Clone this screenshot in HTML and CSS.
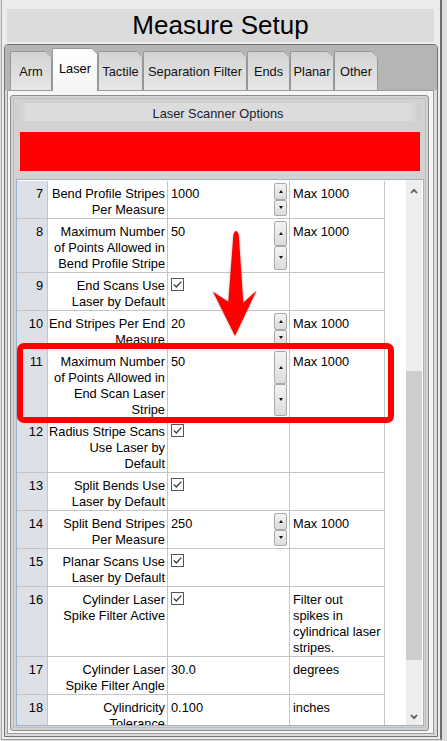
FILE: index.html
```html
<!DOCTYPE html>
<html>
<head>
<meta charset="utf-8">
<title>Measure Setup</title>
<link rel="stylesheet" href="styles.css">
</head>
<body>
<div class="app">
  <div class="title">Measure Setup</div>
  <div class="frame">
    <div class="tabs">
      <div class="tab tab-arm">Arm</div>
      <div class="tab tab-laser active">Laser</div>
      <div class="tab tab-tactile">Tactile</div>
      <div class="tab tab-sep">Separation Filter</div>
      <div class="tab tab-ends">Ends</div>
      <div class="tab tab-planar">Planar</div>
      <div class="tab tab-other">Other</div>
    </div>
    <div class="page">
      <div class="panel">
        <div class="panel-head">Laser Scanner Options</div>
        <div class="red-bar"></div>
        <div class="grid-box">
          <div class="grid-view">
            <div class="grid">
              <div class="c n">7</div>
              <div class="c l">Bend Profile Stripes<br>Per Measure</div>
              <div class="c v"><span class="txt">1000</span><span class="spin"><span class="up"></span><span class="dn"></span></span></div>
              <div class="c u">Max 1000</div>

              <div class="c n">8</div>
              <div class="c l">Maximum Number<br>of Points Allowed in<br>Bend Profile Stripe</div>
              <div class="c v"><span class="txt">50</span><span class="spin"><span class="up"></span><span class="dn"></span></span></div>
              <div class="c u">Max 1000</div>

              <div class="c n">9</div>
              <div class="c l">End Scans Use<br>Laser by Default</div>
              <div class="c v"><svg class="cb" viewBox="0 0 13 13"><rect x="0.5" y="0.5" width="12" height="12" fill="#fff" stroke="#555"/><path d="M2.8 6.4 L5.3 9 L10.3 3.6" fill="none" stroke="#3a3a3a" stroke-width="1.3"/></svg></div>
              <div class="c u"></div>

              <div class="c n">10</div>
              <div class="c l">End Stripes Per End<br>Measure</div>
              <div class="c v"><span class="txt">20</span><span class="spin"><span class="up"></span><span class="dn"></span></span></div>
              <div class="c u">Max 1000</div>

              <div class="c n">11</div>
              <div class="c l">Maximum Number<br>of Points Allowed in<br>End Scan Laser<br>Stripe</div>
              <div class="c v"><span class="txt">50</span><span class="spin"><span class="up"></span><span class="dn"></span></span></div>
              <div class="c u">Max 1000</div>

              <div class="c n">12</div>
              <div class="c l">Radius Stripe Scans<br>Use Laser by<br>Default</div>
              <div class="c v"><svg class="cb" viewBox="0 0 13 13"><rect x="0.5" y="0.5" width="12" height="12" fill="#fff" stroke="#555"/><path d="M2.8 6.4 L5.3 9 L10.3 3.6" fill="none" stroke="#3a3a3a" stroke-width="1.3"/></svg></div>
              <div class="c u"></div>

              <div class="c n">13</div>
              <div class="c l">Split Bends Use<br>Laser by Default</div>
              <div class="c v"><svg class="cb" viewBox="0 0 13 13"><rect x="0.5" y="0.5" width="12" height="12" fill="#fff" stroke="#555"/><path d="M2.8 6.4 L5.3 9 L10.3 3.6" fill="none" stroke="#3a3a3a" stroke-width="1.3"/></svg></div>
              <div class="c u"></div>

              <div class="c n">14</div>
              <div class="c l">Split Bend Stripes<br>Per Measure</div>
              <div class="c v"><span class="txt">250</span><span class="spin"><span class="up"></span><span class="dn"></span></span></div>
              <div class="c u">Max 1000</div>

              <div class="c n">15</div>
              <div class="c l">Planar Scans Use<br>Laser by Default</div>
              <div class="c v"><svg class="cb" viewBox="0 0 13 13"><rect x="0.5" y="0.5" width="12" height="12" fill="#fff" stroke="#555"/><path d="M2.8 6.4 L5.3 9 L10.3 3.6" fill="none" stroke="#3a3a3a" stroke-width="1.3"/></svg></div>
              <div class="c u"></div>

              <div class="c n">16</div>
              <div class="c l">Cylinder Laser<br>Spike Filter Active</div>
              <div class="c v"><svg class="cb" viewBox="0 0 13 13"><rect x="0.5" y="0.5" width="12" height="12" fill="#fff" stroke="#555"/><path d="M2.8 6.4 L5.3 9 L10.3 3.6" fill="none" stroke="#3a3a3a" stroke-width="1.3"/></svg></div>
              <div class="c u">Filter out<br>spikes in<br>cylindrical laser<br>stripes.</div>

              <div class="c n">17</div>
              <div class="c l">Cylinder Laser<br>Spike Filter Angle</div>
              <div class="c v"><span class="txt">30.0</span></div>
              <div class="c u">degrees</div>

              <div class="c n">18</div>
              <div class="c l">Cylindricity<br>Tolerance</div>
              <div class="c v"><span class="txt">0.100</span></div>
              <div class="c u">inches</div>
            </div>
          </div>
          <div class="vscroll">
            <div class="sb-btn sb-up"><svg width="8" height="6" viewBox="0 0 8 6"><polyline points="1,5 4,1.8 7,5" fill="none" stroke="#5c5c5c" stroke-width="1.8"/></svg></div>
            <div class="sb-track"><div class="sb-thumb"></div></div>
            <div class="sb-btn sb-down"><svg width="8" height="6" viewBox="0 0 8 6"><polyline points="1,1 4,4.2 7,1" fill="none" stroke="#5c5c5c" stroke-width="1.8"/></svg></div>
          </div>
        </div>
      </div>
    </div>
  </div>
</div>
<svg class="overlay" width="447" height="741" viewBox="0 0 447 741">
  <rect x="20" y="346" width="371" height="74" rx="4" ry="4" fill="none" stroke="#ff0000" stroke-width="6"/>
  <path class="arrow" d="M233.4 235 Q236 227 238.8 235 L243.3 302.7 L256.5 290.7 L235 336 L213 291.7 L228.3 301.7 Z" fill="#ff0000"/>
</svg>
</body>
</html>
```

FILE: styles.css
```css
* { box-sizing: border-box; }
html, body { margin: 0; padding: 0; }
body {
  position: relative;
  width: 447px;
  height: 741px;
  overflow: hidden;
  background: #dedede;
  font-family: "Liberation Sans", Arial, sans-serif;
  font-size: 12.8px;
  color: #000;
}

.app {
  margin-left: 1px;
  width: 441px;
  height: 740px;
  display: flex;
  flex-direction: column;
  padding-top: 9px;
  background: #ececec;
  border-left: 1px solid #a9a9a9;
  border-right: 2px solid #6f6f6f;
  border-bottom: 1px solid #9d9d9d;
}

.title {
  height: 33px;
  margin: 0 6px 0 5px;
  background: #dcdcdc;
  display: flex;
  align-items: center;
  justify-content: center;
  font-size: 26px;
  color: #000;
}

.frame {
  flex: 1;
  min-height: 0;
  margin: 2px 2px 2px 2px;
  border: 1px solid #737373;
  border-radius: 4px 4px 0 0;
  background: #dadada;
  display: flex;
  flex-direction: column;
}

.tabs {
  height: 45px;
  flex: none;
  background: #b5b5b5;
  border-radius: 3px 3px 0 0;
  display: flex;
  align-items: flex-end;
  padding-left: 5px;
}

.tab {
  height: 39px;
  border: 1px solid #979797;
  border-bottom: none;
  border-radius: 2px 0 0 0;
  display: flex;
  align-items: center;
  justify-content: center;
  white-space: nowrap;
  color: #111;
  background:
    linear-gradient(225deg, transparent 4.4px, #979797 4.4px, #979797 5.5px, transparent 5.5px) border-box,
    linear-gradient(#d3d3d3, #e7e7e7);
  clip-path: polygon(0 0, calc(100% - 7px) 0, 100% 7px, 100% 100%, 0 100%);
}
.tab.active {
  position: relative;
  z-index: 1;
  height: 43px;
  margin-bottom: -1px;
  padding-bottom: 3px;
  color: #000;
  background:
    linear-gradient(225deg, transparent 4.4px, #979797 4.4px, #979797 5.5px, transparent 5.5px) border-box,
    linear-gradient(#ffffff, #f5f5f5);
}
.tab-arm { width: 42px; }
.tab-laser { width: 46px; }
.tab-tactile { width: 45px; }
.tab-sep { width: 104px; }
.tab-ends { width: 43px; }
.tab-planar { width: 44px; }
.tab-other { width: 44px; }

.page {
  flex: 1;
  min-height: 0;
  margin: 0 3px 2px 2px;
  border: 1px solid #9b9b9b;
  background: #f5f5f5;
  padding: 4px 4px 2px 2px;
  display: flex;
  flex-direction: column;
}

.panel {
  flex: 1;
  min-height: 0;
  border: 1px solid #8e8e8e;
  border-radius: 3px;
  background: #d2d2d2;
  box-shadow: inset 0 0 0 2px #d2d2d2, inset 0 0 0 3px #bfbfbf;
  display: flex;
  flex-direction: column;
}

.panel-head {
  flex: none;
  height: 18px;
  margin: 7px 7px 0 4px;
  padding-top: 2px;
  background: linear-gradient(to right, #cbcbcb, #dcdcdc 3%, #dcdcdc 97%, #cbcbcb);
  display: flex;
  align-items: center;
  justify-content: center;
  color: #1b1b2b;
}

.red-bar {
  flex: none;
  height: 39px;
  margin: 11px 8px 0 9px;
  background: #ff0000;
}

.grid-box {
  flex: 1;
  min-height: 0;
  margin: 8px 4px 4px 5px;
  border: 1px solid #9cb3cb;
  background: #fff;
  display: flex;
  overflow: hidden;
}

.grid-view {
  width: 389px;
  flex: none;
  overflow: hidden;
}

.grid {
  margin-top: 1px;
  display: grid;
  grid-template-columns: 31px 120px 122px 95px;
}

.c {
  border-right: 1px solid #c5c5c5;
  border-bottom: 1px solid #c5c5c5;
  line-height: 16px;
  white-space: nowrap;
  padding-top: 5px;
}
.n {
  background: #dde1e7;
  text-align: right;
  padding-right: 4px;
}
.l {
  text-align: right;
  padding-right: 2px;
}
.v {
  display: flex;
  align-items: stretch;
  padding-top: 0;
}
.v .txt {
  flex: 1;
  padding: 5px 0 0 3px;
}
.u {
  padding-left: 3px;
}

.spin {
  width: 13px;
  flex: none;
  margin: 2px 2px 2px 0;
  display: flex;
  flex-direction: column;
}
.spin span {
  flex: 1;
  border: 1px solid #a9a9a9;
  border-radius: 2px;
  background: linear-gradient(#f3f3f3, #dcdcdc);
  display: flex;
  align-items: center;
  justify-content: center;
}
.spin .up::before {
  content: "";
  border-left: 2.5px solid transparent;
  border-right: 2.5px solid transparent;
  border-bottom: 3px solid #111;
}
.spin .dn::before {
  content: "";
  border-left: 2.5px solid transparent;
  border-right: 2.5px solid transparent;
  border-top: 3px solid #111;
}

.cb {
  display: block;
  width: 13px;
  height: 13px;
  margin: 5px 0 0 3px;
}

.vscroll {
  width: 16px;
  flex: none;
  margin-right: 1px;
  background: #eeeeee;
  display: flex;
  flex-direction: column;
}
.sb-btn {
  flex: none;
  display: flex;
  align-items: center;
  justify-content: center;
}
.sb-up { height: 21px; }
.sb-down { height: 16px; }
.sb-btn svg { display: block; }
.sb-track {
  flex: 1;
  min-height: 0;
}
.sb-thumb {
  margin-top: 170px;
  height: 289px;
  background: #cdcdcd;
}

.overlay {
  position: absolute;
  left: 0;
  top: 0;
  pointer-events: none;
}
.arrow {
  filter: drop-shadow(0 0 1.2px rgba(0, 0, 0, 0.35));
}
```
